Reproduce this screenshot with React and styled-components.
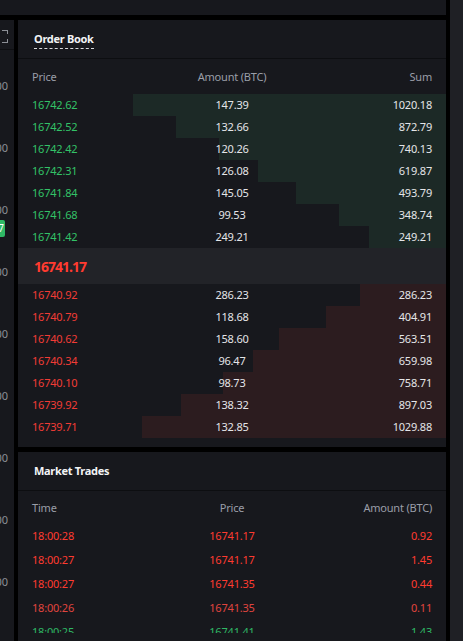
import React from 'react'
import styled, { createGlobalStyle } from 'styled-components'

const GlobalStyle = createGlobalStyle`
  html, body {
    margin: 0;
    padding: 0;
    background: #000;
    overflow: hidden;
  }
  body {
    font-family: "Noto Sans", "Open Sans", sans-serif;
    -webkit-font-smoothing: antialiased;
  }
`

const Page = styled.div`
  display: flex;
  gap: 4px;
  height: 641px;
  width: 463px;
  overflow: hidden;
`

const MainCol = styled.div`
  width: 446px;
  display: flex;
  flex-direction: column;
  gap: 5px;
`

const TopBar = styled.div`
  height: 15px;
  background: #17181d;
`

const Body = styled.div`
  flex: 1;
  display: flex;
  gap: 4px;
  min-height: 0;
`

const SidePanel = styled.div`
  flex: 1;
  background: #1f2025;
`

const ChartStub = styled.div`
  width: 14px;
  background: #17181d;
  overflow: hidden;
  display: flex;
  flex-direction: column;
  align-items: flex-end;
  color: #8c8f96;
  font-size: 11px;
`

const ChartHead = styled.div`
  height: 30px;
  width: 100%;
  border-bottom: 1px solid #0e0f12;
  box-sizing: border-box;
  display: flex;
  justify-content: flex-end;
  align-items: center;
  padding-right: 6px;
  padding-top: 4px;
`

const Corner = styled.div`
  width: 6px;
  height: 13px;
  border: 1.5px solid #8c8f96;
  border-left: none;
  box-sizing: border-box;
  clip-path: polygon(0 0, 100% 0, 100% 30%, 0 30%, 0 70%, 100% 70%, 100% 100%, 0 100%);
`

const AxisLabel = styled.div`
  height: 62px;
  display: flex;
  align-items: center;
  padding-right: 6px;
  white-space: nowrap;
  position: relative;
  margin-top: ${p => (p.$first ? '4px' : '0')};
`

const PriceTag = styled.span`
  position: absolute;
  right: 9px;
  top: 42px;
  background: #2fb865;
  color: #fff;
  font-size: 10px;
  line-height: 17px;
  padding: 0 1px;
  border-radius: 2px;
`

const BookCol = styled.div`
  width: 428px;
  display: flex;
  flex-direction: column;
  gap: 5px;
`

const Panel = styled.section`
  background: #17181d;
  display: flex;
  flex-direction: column;
  flex: ${p => (p.$grow ? 1 : 'none')};
  padding-bottom: ${p => p.$pb || 0}px;
`

const PanelHeader = styled.header`
  height: 39px;
  border-bottom: 1px solid #0d0e11;
  box-sizing: border-box;
  display: flex;
  align-items: center;
  padding: 0 16px;
`

const Title = styled.h2`
  margin: 0;
  font-size: 11px;
  font-weight: 700;
  color: #f2f3f5;
  letter-spacing: -0.3px;
  padding-bottom: 2px;
  border-bottom: ${p => (p.$dashed ? '1px dashed #d8d9dc' : 'none')};
  margin-top: ${p => (p.$dashed ? '2px' : '0')};
`

const Grid = styled.div`
  display: grid;
  grid-template-columns: 1fr 1fr 1fr;
  align-items: center;
  padding: 0 14px 2px;
  box-sizing: border-box;
  height: ${p => p.$h}px;
  flex: none;
  font-size: 11px;
  letter-spacing: -0.2px;
`

const HeadRow = styled(Grid)`
  padding-top: ${p => p.$pt || 0}px;
`

const Cell = styled.span`
  text-align: ${p => p.$align || 'left'};
  color: ${p => p.$color || '#e4e5e8'};
  white-space: nowrap;
`

const MidRow = styled.div`
  height: 36px;
  background: #222328;
  display: flex;
  align-items: center;
  padding: 0 16px;
  color: #ff3b30;
  font-size: 14px;
  font-weight: 700;
  letter-spacing: -1px;
`

const TradeList = styled.div`
  height: 109px;
  overflow: hidden;
  display: flex;
  flex-direction: column;
`

const GREEN = '#33c267'
const RED = '#f23c36'
const MUTED = '#9a9ea8'

const bids = [
  ['16742.62', '147.39', '1020.18', 73.1],
  ['16742.52', '132.66', '872.79', 63.1],
  ['16742.42', '120.26', '740.13', 53.0],
  ['16742.31', '126.08', '619.87', 43.9],
  ['16741.84', '145.05', '493.79', 35.0],
  ['16741.68', '99.53', '348.74', 25.0],
  ['16741.42', '249.21', '249.21', 18.0],
]

const asks = [
  ['16740.92', '286.23', '286.23', 20.1],
  ['16740.79', '118.68', '404.91', 28.0],
  ['16740.62', '158.60', '563.51', 39.0],
  ['16740.34', '96.47', '659.98', 45.1],
  ['16740.10', '98.73', '758.71', 52.1],
  ['16739.92', '138.32', '897.03', 61.9],
  ['16739.71', '132.85', '1029.88', 71.0],
]

const trades = [
  ['18:00:28', '16741.17', '0.92', '#ff3b30'],
  ['18:00:27', '16741.17', '1.45', '#ff3b30'],
  ['18:00:27', '16741.35', '0.44', '#ff3b30'],
  ['18:00:26', '16741.35', '0.11', '#e0453f'],
  ['18:00:25', '16741.41', '1.43', '#2fb865'],
]

const depth = (pct, color) =>
  `linear-gradient(to left, ${color} ${pct}%, transparent ${pct}%)`

const BookRow = ({ row, side }) => {
  const [price, amount, sum, pct] = row
  const bar = side === 'bid' ? '#1c2926' : '#2c1c1f'
  return (
    <Grid $h={22} style={{ background: depth(pct, bar) }}>
      <Cell $color={side === 'bid' ? GREEN : RED}>{price}</Cell>
      <Cell $align="center">{amount}</Cell>
      <Cell $align="right">{sum}</Cell>
    </Grid>
  )
}

const axis = ['16800', '16700', '16600', '16500', '16400', '16300', '16200', '16100', '16000']

export default function App() {
  return (
    <Page>
      <GlobalStyle />
      <MainCol>
        <TopBar />
        <Body>
          <ChartStub>
            <ChartHead>
              <Corner />
            </ChartHead>
            {axis.map((a, i) => (
              <AxisLabel key={a} $first={i === 0}>
                {a}
                {i === 2 && <PriceTag>16741.17</PriceTag>}
              </AxisLabel>
            ))}
          </ChartStub>
          <BookCol>
            <Panel $pb={9}>
              <PanelHeader>
                <Title $dashed>Order Book</Title>
              </PanelHeader>
              <HeadRow $h={35} $pt={2}>
                <Cell $color={MUTED}>Price</Cell>
                <Cell $align="center" $color={MUTED}>Amount (BTC)</Cell>
                <Cell $align="right" $color={MUTED}>Sum</Cell>
              </HeadRow>
              {bids.map(r => (
                <BookRow key={r[0]} row={r} side="bid" />
              ))}
              <MidRow>16741.17</MidRow>
              {asks.map(r => (
                <BookRow key={r[0]} row={r} side="ask" />
              ))}
            </Panel>
            <Panel $grow>
              <PanelHeader>
                <Title>Market Trades</Title>
              </PanelHeader>
              <HeadRow $h={33} $pt={2}>
                <Cell $color={MUTED}>Time</Cell>
                <Cell $align="center" $color={MUTED}>Price</Cell>
                <Cell $align="right" $color={MUTED}>Amount (BTC)</Cell>
              </HeadRow>
              <TradeList>
                {trades.map((t, i) => (
                  <Grid $h={24} key={i}>
                    <Cell $color={t[3]}>{t[0]}</Cell>
                    <Cell $align="center" $color={t[3]}>{t[1]}</Cell>
                    <Cell $align="right" $color={t[3]}>{t[2]}</Cell>
                  </Grid>
                ))}
              </TradeList>
            </Panel>
          </BookCol>
        </Body>
      </MainCol>
      <SidePanel />
    </Page>
  )
}
